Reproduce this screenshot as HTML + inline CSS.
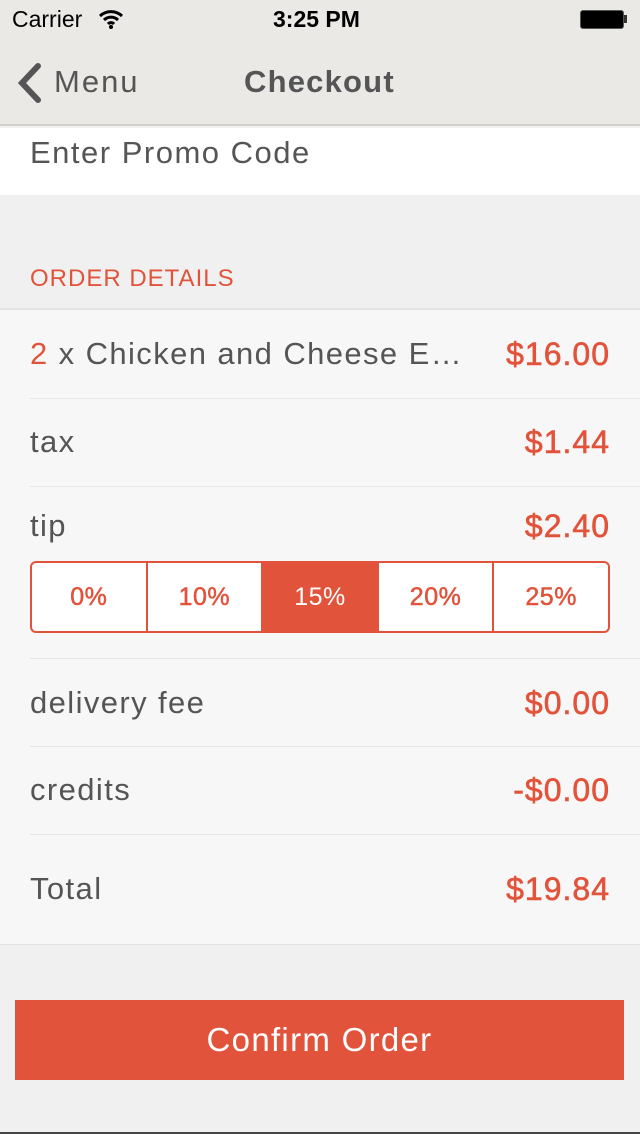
<!DOCTYPE html>
<html><head><style>
*{margin:0;padding:0;box-sizing:border-box}
body{width:640px;height:1134px;background:#f0f0f0;font-family:"Liberation Sans",sans-serif;position:relative;overflow:hidden;color:#555}
.abs{position:absolute}
.nav{left:0;top:0;width:640px;height:126px;background:#eae9e5;border-bottom:2px solid #d0d0cc}
.cells{left:0;top:308px;width:640px;height:637px;background:#f7f7f7;border-top:2px solid #e2e2e2;border-bottom:1px solid #e2e2e2}
.row{position:absolute;left:30px;width:610px;font-size:31px;line-height:36px;letter-spacing:1.4px}
.sep{position:absolute;left:30px;right:0;height:1px;background:#e6e6e6}
.r{position:absolute;right:30px;color:#e2533b;font-size:32px;-webkit-text-stroke:0.6px #e2533b;letter-spacing:1px}
.seg{left:30px;top:561px;width:580px;height:72px;border:2px solid #e2533b;border-radius:6px;display:flex;overflow:hidden;background:#fff}
.seg div{flex:1;display:flex;align-items:center;justify-content:center;color:#e2533b;font-size:25px;border-left:2px solid #e2533b;-webkit-text-stroke:0.5px #e2533b;letter-spacing:0.5px}
.seg div:first-child{border-left:none}
.seg .on{background:#e2533b;color:#fff;-webkit-text-stroke:0}
</style></head><body>
<div class="abs nav"></div>
<div class="abs" style="left:12px;top:6px;font-size:23px;color:#000">Carrier</div>
<svg class="abs" style="left:98px;top:9px" width="26" height="20" viewBox="0 0 26 20"><path d="M2 7a16 16 0 0 1 22 0M6 11a10 10 0 0 1 14 0M10 15a4 4 0 0 1 6 0" stroke="#000" stroke-width="3" fill="none"/><circle cx="13" cy="18" r="2" fill="#000"/></svg>
<div class="abs" style="left:273px;top:6px;font-size:23px;font-weight:bold;color:#000">3:25 PM</div>
<div class="abs" style="left:580px;top:10px;width:44px;height:19px;background:#000;border-radius:3px;border:1px solid #555"></div>
<div class="abs" style="left:624px;top:15px;width:3px;height:8px;background:#333"></div>
<svg class="abs" style="left:12px;top:62px" width="30" height="42" viewBox="0 0 30 42"><path d="M26 4L10 21l16 17" stroke="#555" stroke-width="6" fill="none" stroke-linecap="round"/></svg>
<div class="abs" style="left:54px;top:64px;font-size:31px;color:#555;letter-spacing:2px">Menu</div>
<div class="abs" style="left:244px;top:64px;font-size:31px;font-weight:bold;color:#555;letter-spacing:1.2px">Checkout</div>
<div class="abs" style="left:0;top:128px;width:640px;height:67px;background:#fff"></div>
<div class="abs" style="left:30px;top:135px;font-size:31px;color:#555;letter-spacing:1.5px">Enter Promo Code</div>
<div class="abs" style="left:30px;top:265px;font-size:24px;color:#e2533b;letter-spacing:1px">ORDER DETAILS</div>
<div class="abs cells"></div>
<div class="row" style="top:336px"><span style="color:#e2533b">2</span> x Chicken and Cheese E…<span class="r">$16.00</span></div>
<div class="sep" style="top:398px"></div>
<div class="row" style="top:424px">tax<span class="r">$1.44</span></div>
<div class="sep" style="top:486px"></div>
<div class="row" style="top:508px">tip<span class="r">$2.40</span></div>
<div class="abs seg"><div>0%</div><div>10%</div><div class="on">15%</div><div>20%</div><div>25%</div></div>
<div class="sep" style="top:658px"></div>
<div class="row" style="top:685px">delivery fee<span class="r">$0.00</span></div>
<div class="sep" style="top:746px"></div>
<div class="row" style="top:772px">credits<span class="r">-$0.00</span></div>
<div class="sep" style="top:834px"></div>
<div class="row" style="top:871px">Total<span class="r">$19.84</span></div>
<div class="abs" style="left:15px;top:1000px;width:609px;height:80px;background:#e2533b;color:#fff;font-size:33px;letter-spacing:1.3px;display:flex;align-items:center;justify-content:center">Confirm Order</div>
<div class="abs" style="left:0;top:1132px;width:640px;height:2px;background:#444"></div>
</body></html>
